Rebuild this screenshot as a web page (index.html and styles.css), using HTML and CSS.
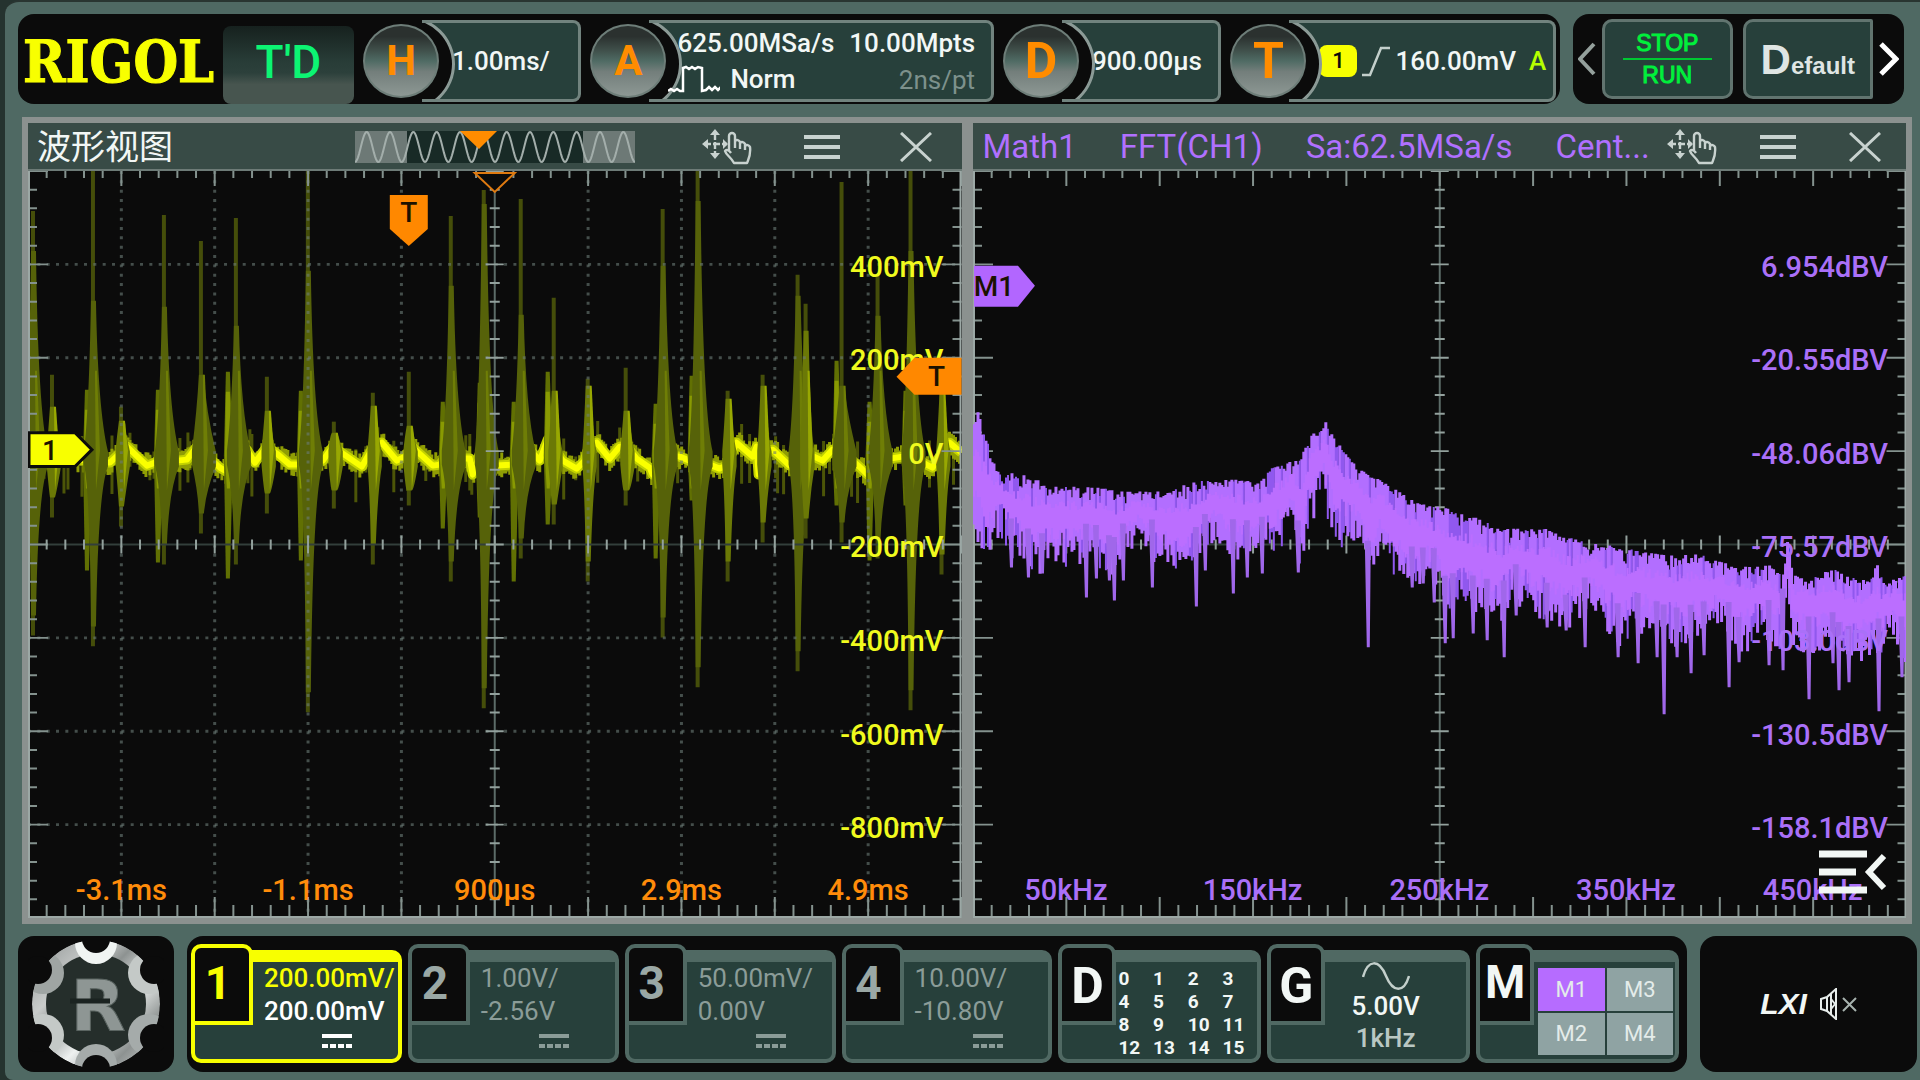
FILE: index.html
```html
<!DOCTYPE html>
<html lang="zh-CN">
<head>
<meta charset="utf-8">
<title>RIGOL</title>
<link rel="stylesheet" href="styles.css">
</head>
<body>
<svg width="0" height="0" class="defs" aria-hidden="true">
  <defs>
    <symbol id="i-hand" viewBox="0 0 50 36">
      <g fill="none" stroke="currentColor" stroke-width="2.4">
        <path d="M13 4v22M2 15h23" stroke-dasharray="7 2"/>
        <path d="M27 21V7a3 3 0 0 1 6 0v12M33 12a3 3 0 0 1 5 1v7M38 14a3 3 0 0 1 5 1v6M43 17a3 3 0 0 1 5 1c1 8-1 11-3 16H32c-3-6-8-8-9-12 1-2 4-1 6 2" stroke-linejoin="round"/>
      </g>
      <path d="M13 0l5 6H8zM13 30l5-6H8zM0 15l6-5v10zM26 15l-5-5v10z" fill="currentColor"/>
    </symbol>
    <symbol id="i-menu" viewBox="0 0 36 30"><path d="M0 5h36M0 15h36M0 25h36" stroke="currentColor" stroke-width="4"/></symbol>
    <symbol id="i-close" viewBox="0 0 32 30"><path d="M1 1l30 28M31 1L1 29" stroke="currentColor" stroke-width="3"/></symbol>
    <symbol id="i-dc" viewBox="0 0 30 16"><path d="M0 2h30" stroke="currentColor" stroke-width="4"/><path d="M0 12h30" stroke="currentColor" stroke-width="4" stroke-dasharray="6 2"/></symbol>
  </defs>
</svg>
<div class="frame">
  <header class="top">
    <div class="bar status">
      <div class="brand">RIGOL</div>
      <button class="trig">T'D</button>
      <button class="mod mod-h"><span class="knob">H</span><span class="box"><span>1.00ms/</span></span></button>
      <button class="mod mod-a"><span class="knob">A</span><span class="box acq">
        <span>625.00MSa/s</span><span class="end">10.00Mpts</span>
        <span class="norm"><svg width="52" height="32" viewBox="0 0 52 32"><path d="M0 28l3-2 3 2 3-2 3 2h3V5l3-1 3 2 3-2 3 2 3-2 4 1v23l4-1 3-3 3 3 3-3 3 3 3-3" fill="none" stroke="#fff" stroke-width="2.5"/></svg>Norm</span><span class="end dim">2ns/pt</span></span></button>
      <button class="mod mod-d"><span class="knob big">D</span><span class="box"><span>900.00µs</span></span></button>
      <button class="mod mod-t"><span class="knob big">T</span><span class="box src"><b class="chip">1</b><svg width="28" height="32" viewBox="0 0 28 32"><path d="M0 30h8L19 3h9" fill="none" stroke="#c3cfcb" stroke-width="2.5"/></svg><span>160.00mV</span><i class="auto">A</i></span></button>
    </div>
    <div class="bar quick">
      <button class="arrow" aria-label="prev"><svg width="18" height="34" viewBox="0 0 18 34"><path d="M16 2L2 17l14 15" fill="none" stroke="#94a09c" stroke-width="4"/></svg></button>
      <button class="key run"><span>STOP</span><span>RUN</span></button>
      <button class="key def"><span><b>D</b>efault</span></button>
      <button class="arrow" aria-label="next"><svg width="20" height="34" viewBox="0 0 20 34"><path d="M2 2l15 15L2 32" fill="none" stroke="#fff" stroke-width="5"/></svg></button>
    </div>
  </header>

  <main class="views">
    <section class="view">
      <div class="title">
        <h2>波形视图</h2>
        <svg class="strip" width="280" height="32" viewBox="0 0 280 32">
          <rect width="280" height="32" fill="#6d7976"/><rect x="52" width="176" height="32" fill="#182a26"/>
          <path id="mini" fill="none" stroke="#a3aeab" stroke-width="2"/>
          <path d="M105 0h37l-18 18z" fill="#ff8c00"/>
        </svg>
        <div class="tools">
          <button aria-label="move"><svg width="50" height="36"><use href="#i-hand"/></svg></button>
          <button aria-label="menu"><svg width="36" height="30"><use href="#i-menu"/></svg></button>
          <button class="close" aria-label="close"><svg width="32" height="30"><use href="#i-close"/></svg></button>
        </div>
      </div>
      <div class="plot">
        <svg class="chart" viewBox="0 0 934 748" preserveAspectRatio="none">
          <g id="wave"></g>
          <g id="gridL"></g>
          <g id="ticksL"></g>
        </svg>
        <div class="ylab yellow"><span>400mV</span><span>200mV</span><span>0V</span><span>-200mV</span><span>-400mV</span><span>-600mV</span><span>-800mV</span></div>
        <div class="xlab orange"><span>-3.1ms</span><span>-1.1ms</span><span>900µs</span><span>2.9ms</span><span>4.9ms</span></div>
        <svg class="chart" viewBox="0 0 934 748" preserveAspectRatio="none">
          <path d="M447 2h40l-20 19z" fill="#0b0b0b" stroke="#e07a10" stroke-width="2"/>
          <path d="M362 24h38v34l-19 17-19-17z" fill="#ff8800"/>
          <text x="381" y="51" class="mk">T</text>
          <path d="M934 187h-47l-18 19 18 18h47z" fill="#ff8800"/>
          <text x="909" y="215" class="mk">T</text>
          <path d="M1 262h46l17 17-17 17H1z" fill="#f8ff00" stroke="#0b0b0b" stroke-width="3"/>
          <text x="22" y="289" class="mk">1</text>
        </svg>
      </div>
    </section>

    <section class="view">
      <div class="title">
        <div class="fft"><span>Math1</span><span>FFT(CH1)</span><span>Sa:62.5MSa/s</span><span>Cent...</span></div>
        <div class="tools tight">
          <button aria-label="move"><svg width="50" height="36"><use href="#i-hand"/></svg></button>
          <button aria-label="menu"><svg width="36" height="30"><use href="#i-menu"/></svg></button>
          <button class="close" aria-label="close"><svg width="32" height="30"><use href="#i-close"/></svg></button>
        </div>
      </div>
      <div class="plot">
        <svg class="chart" viewBox="0 0 934 748" preserveAspectRatio="none">
          <g id="ticksR"></g>
          <g id="fft"></g>
        </svg>
        <div class="ylab purple"><span>6.954dBV</span><span>-20.55dBV</span><span>-48.06dBV</span><span>-75.57dBV</span><span>-103.0dBV</span><span>-130.5dBV</span><span>-158.1dBV</span></div>
        <div class="xlab purple"><span>50kHz</span><span>150kHz</span><span>250kHz</span><span>350kHz</span><span>450kHz</span></div>
        <svg class="chart" viewBox="0 0 934 748" preserveAspectRatio="none">
          <path d="M1 95h44l17 20-17 21H1z" fill="#b266ff"/>
          <text x="21" y="125" class="mk">M1</text>
        </svg>
        <button class="drawer" aria-label="drawer"><svg width="68" height="46" viewBox="0 0 68 46"><path d="M0 5h48M0 23h37M0 41h48" stroke="#f2f7f5" stroke-width="7"/><path d="M65 7L50 23l15 16" fill="none" stroke="#f2f7f5" stroke-width="6"/></svg></button>
      </div>
    </section>
  </main>

  <footer class="bottom">
    <button class="bar home" aria-label="home">
      <svg width="136" height="130" viewBox="-68 -65 136 130">
        <defs>
          <linearGradient id="metal" x1="0" y1="0" x2="1" y2="1"><stop offset="0" stop-color="#8c9190"/><stop offset=".3" stop-color="#c9cccb"/><stop offset=".42" stop-color="#8d9291"/><stop offset=".6" stop-color="#eef1f0"/><stop offset=".8" stop-color="#8d9291"/><stop offset="1" stop-color="#d5d8d7"/></linearGradient>
          <clipPath id="disc"><circle r="64"/></clipPath>
        </defs>
        <g clip-path="url(#disc)">
          <circle r="64" fill="url(#metal)"/><circle r="50" fill="#252e2b"/>
          <g fill="#c4c9c7"><circle cy="-61" r="21" fill="#f0f4f2"/><circle cy="61" r="21" fill="#a5abaa"/><circle cx="-53" cy="-31" r="21" fill="#9fa5a3"/><circle cx="53" cy="-31" r="21"/><circle cx="-53" cy="31" r="21"/><circle cx="53" cy="31" r="21" fill="#a5abaa"/></g>
        </g>
        <g fill="#0b0b0b"><circle cy="-65" r="14"/><circle cy="65" r="14"/><circle cx="-58" cy="-34" r="14"/><circle cx="58" cy="-34" r="14"/><circle cx="-58" cy="34" r="14"/><circle cx="58" cy="34" r="14"/></g>
        <text x="2" y="27" class="emblem">R</text>
        <path d="M-26-3h40" stroke="#1b2321" stroke-width="5"/>
      </svg>
    </button>
    <div class="bar channels">
      <button class="ch on"><b class="tab">1</b><span class="body"><span class="scale">200.00mV/</span><span>200.00mV</span><svg width="30" height="16"><use href="#i-dc"/></svg></span></button>
      <button class="ch"><b class="tab">2</b><span class="body"><span>1.00V/</span><span>-2.56V</span><svg width="30" height="16"><use href="#i-dc"/></svg></span></button>
      <button class="ch"><b class="tab">3</b><span class="body"><span>50.00mV/</span><span>0.00V</span><svg width="30" height="16"><use href="#i-dc"/></svg></span></button>
      <button class="ch"><b class="tab">4</b><span class="body"><span>10.00V/</span><span>-10.80V</span><svg width="30" height="16"><use href="#i-dc"/></svg></span></button>
      <button class="ch aux"><b class="tab">D</b><span class="body bits"><i>0</i><i>1</i><i>2</i><i>3</i><i>4</i><i>5</i><i>6</i><i>7</i><i>8</i><i>9</i><i>10</i><i>11</i><i>12</i><i>13</i><i>14</i><i>15</i></span></button>
      <button class="ch aux"><b class="tab">G</b><span class="body gen"><svg width="48" height="28" viewBox="0 0 48 28"><path d="M1 15C6-3 17-3 24 14s18 17 23 0" fill="none" stroke="#c3cfcb" stroke-width="2.5"/></svg><span>5.00V</span><span class="freq">1kHz</span></span></button>
      <div class="ch aux"><b class="tab math">M</b><div class="body maths"><button class="sel">M1</button><button>M3</button><button>M2</button><button>M4</button></div></div>
    </div>
    <div class="bar sys">
      <span class="lxi">LXI</span>
      <svg width="38" height="32" viewBox="0 0 38 32"><path d="M2 11l6-2 9-8v30l-9-8-6-2zM8 9v14M12 5v22" fill="none" stroke="#e8eeec" stroke-width="2"/><path d="M12 11l4 5-4 5" fill="none" stroke="#e8eeec" stroke-width="2"/><path d="M24 10l13 13M37 10L24 23" stroke="#a7b2ae" stroke-width="2"/></svg>
    </div>
  </footer>
</div>
<script src="scope.js"></script>
</body>
</html>
```
FILE: styles.css
```css
* { box-sizing: border-box; }
body { margin: 0; background: #25332f; font-family: Roboto, "Noto Sans CJK SC", sans-serif; font-size: 26px; line-height: 30px; color: #f2f7f5; }
button { margin: 0; padding: 0; border: 0; background: none; color: inherit; font: inherit; cursor: pointer; }
svg { display: block; flex: none; }
.defs { position: absolute; }
i { font-style: normal; }
.frame { display: flex; flex-direction: column; min-height: 100vh; padding: 12px 3px 8px 13px; margin-left: 5px; background: #4f6963; border-top: 2px solid #293531; border-top-left-radius: 14px; border-bottom-left-radius: 8px; }
.bar { background: #0b0b0b; border-radius: 16px; }

.top { display: flex; gap: 13px; height: 90px; margin-right: 13px; }
.status { flex: 1; display: flex; align-items: center; gap: 9px; padding: 4px 4px 0 5px; }
.brand { width: 191px; padding-top: 2px; color: #f8ff00; font: bold 57px/60px "DejaVu Serif Condensed", "DejaVu Serif", serif; -webkit-text-stroke: 1px #f8ff00; white-space: nowrap; }
.trig { align-self: flex-end; width: 131px; height: 78px; padding-bottom: 6px; border-radius: 8px; background: linear-gradient(#16211e, #283c37 45%, #2c403b 60%, #47554f 75%); color: #0cf573; font-size: 46px; font-weight: 500; }
.mod { display: flex; align-items: center; min-width: 0; font-weight: 500; }
.mod-h, .mod-d { flex: 218 1 0; }
.mod-a { flex: 403 1 0; }
.mod-t { flex: 325 1 0; }
.knob { flex: none; position: relative; z-index: 1; display: grid; place-items: center; width: 76px; height: 74px; margin-right: -17px; border: 2px solid #6d7d78; border-radius: 50%; background: linear-gradient(#2b312f 15%, #40504b 35%, #4f6b64 50%, #737e7b 65%, #8d9894); color: #ff8c00; font-size: 42px; font-weight: 700; }
.big { font-size: 50px; }
.box { flex: 1; position: relative; overflow: hidden; display: flex; align-items: center; height: 82px; padding-left: 30px; border: 3px solid #71837e; border-left: 0; border-radius: 0 8px 8px 0; background: #27403b; white-space: nowrap; }
.box::before { content: ""; position: absolute; left: -65px; top: -7px; width: 92px; height: 90px; border: 3px solid #8b9a96; border-radius: 50%; background: #0b0b0b; }
.acq { display: grid; grid-template-columns: 1fr auto; align-content: center; row-gap: 5px; padding: 0 16px 0 28px; text-align: left; }
.norm { position: relative; display: flex; align-items: center; gap: 10px; height: 32px; margin-left: -9px; }
.end { text-align: right; align-self: end; }
.dim { color: #7d918c; font-weight: 400; }
.src { gap: 5px; }
.chip { width: 38px; height: 32px; border-radius: 8px; background: #f8ff00; color: #0b0b0b; font-size: 22px; font-weight: 500; line-height: 32px; }
.auto { margin-left: 8px; color: #b6ff00; }
.quick { display: flex; align-items: center; gap: 6px; padding: 0 5px; width: 331px; }
.key { flex: 1 1 131px; height: 80px; border: 3px solid #61746f; border-radius: 10px; background: #27403b; }
.run { display: flex; flex-direction: column; justify-content: center; padding: 0 18px; color: #00f03c; font: 23px/30px "Liberation Sans", sans-serif; -webkit-text-stroke: 1px #00f03c; }
.run span + span { border-top: 2px solid #00c832; }
.def { margin-left: 4px; padding-top: 8px; border-top-right-radius: 2px; border-bottom-right-radius: 2px; color: #dfe5e3; font: bold 24px/40px "Liberation Sans", sans-serif; }
.def b { font-size: 42px; }

.views { flex: 1; display: grid; grid-template-columns: 1fr 1fr; gap: 11px; margin: 13px 5px 12px 4px; padding: 6px; background: #8b918f; }
.view { display: flex; flex-direction: column; min-width: 0; }
.title { display: flex; align-items: center; height: 48px; padding: 2px 0 0 9px; background: #384b46; border-bottom: 2px solid #6d7b77; white-space: nowrap; }
.title h2 { width: 136px; margin: 0; font-size: 34px; font-weight: 400; line-height: 44px; }
.strip { margin-left: 182px; }
.tools { display: flex; align-items: center; gap: 52px; margin-left: auto; padding-right: 30px; color: #c8d2cf; }
.close { padding-left: 8px; }
.tight { gap: 43px; padding-right: 25px; }
.tight .close { padding-left: 10px; }
.fft { display: flex; gap: 43px; padding-left: 1px; color: #b070ff; font-size: 33px; line-height: 40px; }
.plot { flex: 1; position: relative; background: #0b0b0b; overflow: hidden; }
.chart { position: absolute; inset: 0; width: 100%; height: 100%; }
.mk { font-size: 28px; font-weight: 500; text-anchor: middle; fill: #1c1200; }
.ylab { position: absolute; inset: 6.25% 18px 5.75% auto; display: grid; grid-template-rows: repeat(7, 1fr); align-items: center; padding-top: 2px; text-align: right; font-size: 29px; font-weight: 500; }
.xlab { position: absolute; inset: auto 0 12px; display: grid; grid-template-columns: repeat(5, 1fr); text-align: center; font-size: 29px; font-weight: 500; line-height: 32px; }
.yellow { color: #f0fa1e; }
.orange { color: #ff8c0a; }
.purple { color: #aa70f8; }
.drawer { position: absolute; right: 19px; bottom: 23px; }

.bottom { display: flex; gap: 13px; min-height: 136px; }
.home { width: 156px; display: grid; place-items: center; }
.emblem { font: bold 72px "DejaVu Sans", sans-serif; text-anchor: middle; fill: #8e9694; stroke: #5a6461; }
.channels { flex: 1; display: flex; gap: 6px; padding: 8px 8px 9px 4px; }
.ch { flex: 212 1 0; position: relative; display: flex; padding-top: 6px; color: #8b9c98; }
.aux { flex-grow: 204; color: #f2f7f5; }
.tab { position: absolute; left: 0; top: 0; width: 62px; height: 81px; padding-top: 13px; padding-right: 8px; border: 4px solid #506963; border-radius: 10px 10px 0 0; background: #0b0b0b; color: #9aa8a5; font-size: 46px; line-height: 44px; text-align: center; }
.aux .tab { width: 58px; padding: 16px 0 0; color: #f2f7f5; font-size: 50px; }
.aux .math { font-size: 46px; padding-top: 12px; }
.body { flex: 1; min-width: 0; display: flex; flex-direction: column; padding: 0 0 0 69px; border: 4px solid #506963; border-top-width: 12px; border-radius: 10px; background: #27403b; text-align: left; line-height: 33px; white-space: nowrap; }
.body > svg { margin: 6px 0 0 58px; }
.on .body, .on .tab { border-color: #f8ff00; }
.on .tab, .scale { color: #f8ff00; }
.on { color: #fff; font-weight: 500; }
.bits { display: grid; grid-template-columns: repeat(4, 1fr); align-content: center; padding: 4px 0 0 56px; font-size: 19px; font-weight: 700; line-height: 23px; }
.gen { align-items: center; padding-left: 34px; }
.gen > svg { margin: 0; }
.gen span { line-height: 32px; font-weight: 500; }
.gen .freq { color: #b9c7c3; }
.maths { display: grid; grid-template-columns: 1fr 1fr; gap: 2px; padding: 6px 2px 4px 58px; }
.maths button { background: #8fa3a3; color: #e4ecea; font-size: 22px; }
.maths .sel { background: #b66cff; }
.sys { width: 217px; display: flex; align-items: center; justify-content: center; gap: 12px; }
.lxi { font: italic bold 30px/34px "Liberation Sans", sans-serif; }
```
FILE: scope.js
```js
const NS = 'http://www.w3.org/2000/svg';
const W = 934, H = 748, CX = W / 10, CY = H / 8;
let seed = 7;
const rnd = () => (seed = (seed * 16807) % 2147483647) / 2147483647;
function path(id, d, attrs) {
  const p = document.createElementNS(NS, 'path');
  p.setAttribute('d', d);
  for (const k in attrs) p.setAttribute(k, attrs[k]);
  document.getElementById(id).appendChild(p);
}
function lerp(pts, x) {
  for (let i = 1; i < pts.length; i++) {
    if (x <= pts[i][0]) {
      const [a, b] = pts[i - 1], [c, d] = pts[i];
      return b + (d - b) * (x - a) / (c - a);
    }
  }
  return pts[pts.length - 1][1];
}

// Dotted graticule
let dots = '';
for (let i = 1; i < 10; i++) if (i !== 5) dots += `M${i * CX} 0V${H}`;
path('gridL', dots, { stroke: '#6b7b76', opacity: .6, 'stroke-width': 3, 'stroke-dasharray': '3 6.35' });
let rows = '';
for (const j of [1, 2, 5, 6, 7]) rows += `M0 ${j * CY}H${W}`;
path('gridL', rows, { stroke: '#6b7b76', opacity: .6, 'stroke-width': 3, 'stroke-dasharray': '3 6.34' });

// Edge and centre ticks
for (const id of ['ticksL', 'ticksR']) {
  let edge = '', mid = '';
  for (let i = 0; i <= 50; i++) {
    const x = i * W / 50, l = i % 5 ? 10 : 18, m = i % 5 ? 5 : 9;
    edge += `M${x} 0v${l - 3}M${x} ${H}v${-l - 3}`;
    mid += `M${x} ${H / 2 - m}v${2 * m}`;
  }
  for (let j = 0; j <= 40; j++) {
    const y = j * H / 40, l = j % 5 ? 9 : 20, m = j % 5 ? 5 : 9;
    edge += `M0 ${y}h${l}M${W} ${y}h${-l}`;
    mid += `M${W / 2 - m} ${y}h${2 * m}`;
  }
  path(id, `M0 ${H / 2}H${W}`, { stroke: '#333f3b', 'stroke-width': 2 });
  path(id, `M${W / 2} 0V${H}`, { stroke: '#5c6c68', 'stroke-width': 2 });
  path(id, edge, { stroke: '#84928e', 'stroke-width': 2 });
  path(id, mid, { stroke: '#93a19d', 'stroke-width': 2 });
  path(id, `M1 0V${H}M${W - 1} 0V${H}M0 ${H - 1}H${W}`, { stroke: '#9ca8a5', 'stroke-width': 2 });
}

// Overview strip
let mini = 'M0 31';
for (let x = 1; x <= 280; x++) mini += `L${x} ${16 + 15 * Math.cos(x / 280 * 24 * Math.PI)}`;
document.getElementById('mini').setAttribute('d', mini);

// Time-domain bursts: x, peak, shoulder, trough
const bursts = [
  [5,40,80,465],[24,204,236,347],[65,0,130,476],[93,236,250,356],[136,44,136,394],[173,70,204,363],[208,47,155,394],
  [239,206,240,343],[280,0,100,542],[306,251,262,338],[345,222,235,394],[381,201,255,335],[423,45,115,411],[456,19,33,538],
  [493,28,144,388],[526,127,220,354],[560,208,215,411],[598,197,240,335],[635,38,95,467],[670,0,30,517],[700,220,228,411],
  [735,204,215,372],[770,104,125,501],[778,133,160,368],[814,11,215,372],[850,104,145,388],[883,0,80,540],[914,215,222,404]
];
const pre = [[59,219,400],[130,219,392],[200,201,408],[273,220,390],[415,231,358],[452,212,347],[486,231,411],[520,201,354],[628,233,388],[664,205,330],[809,190,335],[842,231,390],[878,220,335]];
const base = [[0,285],[40,287],[70,292],[82,292],[99,276],[119,295],[127,292],[136,284],[149,290],[159,289],[169,276],[180,286],[192,297],[199,301],[208,280],[219,279],[227,292],[239,276],[249,283],[262,294],[272,294],[285,284],[295,290],[305,276],[315,283],[334,296],[344,279],[354,272],[369,290],[377,286],[384,276],[405,295],[412,294],[423,280],[435,288],[442,288],[445,304],[452,283],[462,293],[469,295],[484,294],[492,276],[502,279],[512,290],[520,269],[535,290],[549,298],[557,290],[561,276],[569,272],[582,288],[592,276],[599,276],[609,288],[622,297],[625,304],[636,284],[652,286],[662,290],[670,282],[682,294],[692,298],[699,295],[709,272],[725,286],[729,276],[731,304],[737,280],[745,279],[762,295],[769,283],[782,284],[795,290],[805,279],[814,283],[825,290],[835,299],[840,304],[850,284],[862,288],[875,286],[885,286],[899,294],[905,297],[912,286],[922,272],[934,282]];

let haze = '', fuzz = '';
for (let x = 0; x < W; x += 2) {
  const y = lerp(base, x);
  haze += `M${x} ${y - 5 - rnd() * 8}V${y + 5 + rnd() * 8}`;
  if (rnd() > .84) fuzz += `M${x} ${y - 8 - rnd() * 18}V${y + 12 + rnd() * 28}`;
}
path('wave', fuzz, { stroke: '#4c5508', 'stroke-width': 3 });
path('wave', haze, { stroke: '#8f9d04', 'stroke-width': 3 });
let line = '';
base.forEach(([x, y], i) => { line += `${i ? 'L' : 'M'}${x} ${y}`; });
path('wave', line, { fill: 'none', stroke: '#c3d200', 'stroke-width': 10, 'stroke-linejoin': 'round' });
path('wave', line, { fill: 'none', stroke: '#faff00', 'stroke-width': 6, 'stroke-linejoin': 'round' });

for (const [x, t, b] of pre) {
  path('wave', `M${x - 2} ${t}h4L${x + 5} 285L${x + 2} ${b}h-4L${x - 4} 285z`, { fill: '#617003' });
  path('wave', `M${x - 2} ${t + 20}h4L${x + 4} 285L${x + 2} 318h-3L${x - 3} 285z`, { fill: '#899a02' });
}
for (const [x, t, s, b] of bursts) {
  const tall = b - t > 260;
  const w = tall ? 15 : 9;
  const end = Math.max(320, b - 20);
  path('wave', `M${x - 2} ${t}h4V${b}h-4z`, { fill: '#454e0a' });
  path('wave', `M${x - 2} ${s}h5Q${x + 5} ${tall ? 240 : 265} ${x + w} 281V296Q${x + 5} 320 ${x + 3} ${end}h-5Q${x - 3} 320 ${x - w * .6} 294V280Q${x - 4} ${tall ? 240 : 265} ${x - 2} ${s}z`, { fill: tall ? '#566209' : '#6b7906' });
  path('wave', `M${x + 2} ${Math.max(s, 200)}h2L${x + 7} 280L${x + 3} 320z`, { fill: tall ? '#6f7e06' : '#98a802' });
}

// Spectrum
const hi = [[0,257],[3,250],[5,238],[9,262],[14,268],[19,292],[30,303],[54,307],[80,318],[120,318],[160,323],[194,323],[220,313],[264,310],[287,315],[297,300],[327,290],[340,265],[349,262],[353,248],[359,265],[374,287],[390,302],[417,317],[440,332],[460,338],[470,337],[484,345],[500,347],[527,360],[577,360],[600,370],[654,380],[694,387],[727,385],[747,393],[767,398],[797,397],[810,408],[815,373],[820,403],[840,408],[867,398],[884,412],[900,408],[905,392],[910,413],[934,407]];
const lo = [[0,363],[15,377],[27,350],[40,377],[47,372],[60,390],[87,383],[120,377],[140,393],[164,357],[187,383],[217,390],[240,357],[264,377],[307,367],[320,337],[327,390],[337,340],[350,313],[357,347],[370,363],[390,360],[394,397],[410,367],[424,400],[464,403],[474,437],[487,417],[500,430],[530,437],[540,417],[567,433],[594,450],[617,427],[647,460],[664,447],[700,463],[730,457],[747,443],[767,473],[790,450],[807,463],[815,410],[820,463],[840,473],[854,457],[870,483],[894,473],[910,473],[920,450],[934,483]];
const nulls = [[38,397],[55,407],[69,403],[113,427],[123,408],[136,410],[141,430],[150,410],[179,417],[223,436],[232,400],[260,423],[274,407],[289,403],[325,402],[395,477],[439,417],[450,413],[461,432],[472,473],[480,468],[500,463],[514,470],[531,487],[543,445],[574,457],[593,460],[612,477],[645,487],[665,493],[684,487],[691,544],[704,487],[718,503],[731,485],[756,517],[766,492],[796,495],[810,500],[836,529],[860,493],[866,520],[876,512],[906,541],[929,507]];
let dark = '', lit = '', core = '';
for (let x = 1; x < W; x += 2) {
  const a = lerp(hi, x) - 2, b = lerp(lo, x);
  const top = a + rnd() * rnd() * 17, bot = b - 8 + rnd() * 24 - (rnd() > .6 ? 20 * rnd() : 0);
  if (rnd() > .8) dark += `M${x} ${top}V${bot}`; else lit += `M${x} ${top}V${bot}`;
  core += `M${x} ${a + (b - a) * (.22 + rnd() * .15)}V${a + (b - a) * (.6 + rnd() * .25)}`;
}
path('fft', lit, { stroke: '#b26eff', 'stroke-width': 3 });
path('fft', dark, { stroke: '#9058ee', 'stroke-width': 2 });
path('fft', core, { stroke: '#bb6eff', 'stroke-width': 2 });
let deep = '';
for (const [x, y] of nulls) deep += `M${x - 3} ${lerp(lo, x) - 25}h6L${x + 2} ${y}h-3z`;
path('fft', deep, { fill: '#a067ea' });
```
